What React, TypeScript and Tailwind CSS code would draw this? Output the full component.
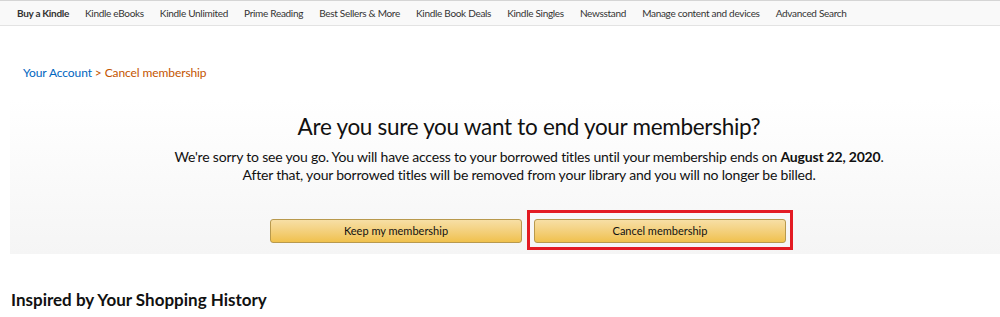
import React from "react";

const navItems = [
  "Kindle eBooks",
  "Kindle Unlimited",
  "Prime Reading",
  "Best Sellers & More",
  "Kindle Book Deals",
  "Kindle Singles",
  "Newsstand",
  "Manage content and devices",
  "Advanced Search",
];

export default function App() {
  return (
    <div className="h-[317px] w-[1000px] overflow-hidden bg-white font-['Lato','Liberation_Sans',sans-serif] text-[#111]">
      {/* sub nav */}
      <div className="flex h-[26px] items-center gap-[16px] border-y border-t-[#d5d5d5] border-b-[#e3e3e3] bg-[#f9f9f9] pl-[17px] text-[10px] tracking-[-0.3px] text-[#333]">
        <span className="font-bold">Buy a Kindle</span>
        {navItems.map((item) => (
          <span key={item}>{item}</span>
        ))}
      </div>

      {/* breadcrumb */}
      <div className="mt-[38px] pl-[23px] text-[12px] tracking-[-0.1px]">
        <span className="text-[#0066c0]">Your Account</span>
        <span className="text-[#c45500]"> &gt; Cancel membership</span>
      </div>

      {/* confirmation panel */}
      <div className="ml-[10px] mt-[18px] flex h-[154px] flex-col items-center bg-gradient-to-b from-white to-[#f5f5f5] pl-[48px] pt-[12px]">
        <h1 className="text-[22.5px] leading-[30px] tracking-[-0.3px] text-[#111]">
          Are you sure you want to end your membership?
        </h1>
        <p className="mt-[6px] text-center text-[14px] leading-[18px] tracking-[-0.2px] text-[#111]">
          We're sorry to see you go. You will have access to your borrowed titles until your membership ends on{" "}
          <b>August 22, 2020</b>.
          <br />
          After that, your borrowed titles will be removed from your library and you will no longer be billed.
        </p>

        <div className="mt-[26px] flex items-center">
          <div className="p-[5px]">
            <button className="h-[24px] w-[252px] rounded-[3px] border border-[#b8994d] bg-gradient-to-b from-[#f7dfa5] to-[#f0c14b] text-[11px] text-[#111]">
              Keep my membership
            </button>
          </div>
          <div className="border-[3px] border-[#e31b23] p-[4px]">
            <button className="h-[24px] w-[252px] rounded-[3px] border border-[#b8994d] bg-gradient-to-b from-[#f7dfa5] to-[#f0c14b] text-[11px] text-[#111]">
              Cancel membership
            </button>
          </div>
        </div>
      </div>

      <h2 className="mt-[33px] pl-[11px] text-[17px] font-bold text-[#111]">
        Inspired by Your Shopping History
      </h2>
    </div>
  );
}
